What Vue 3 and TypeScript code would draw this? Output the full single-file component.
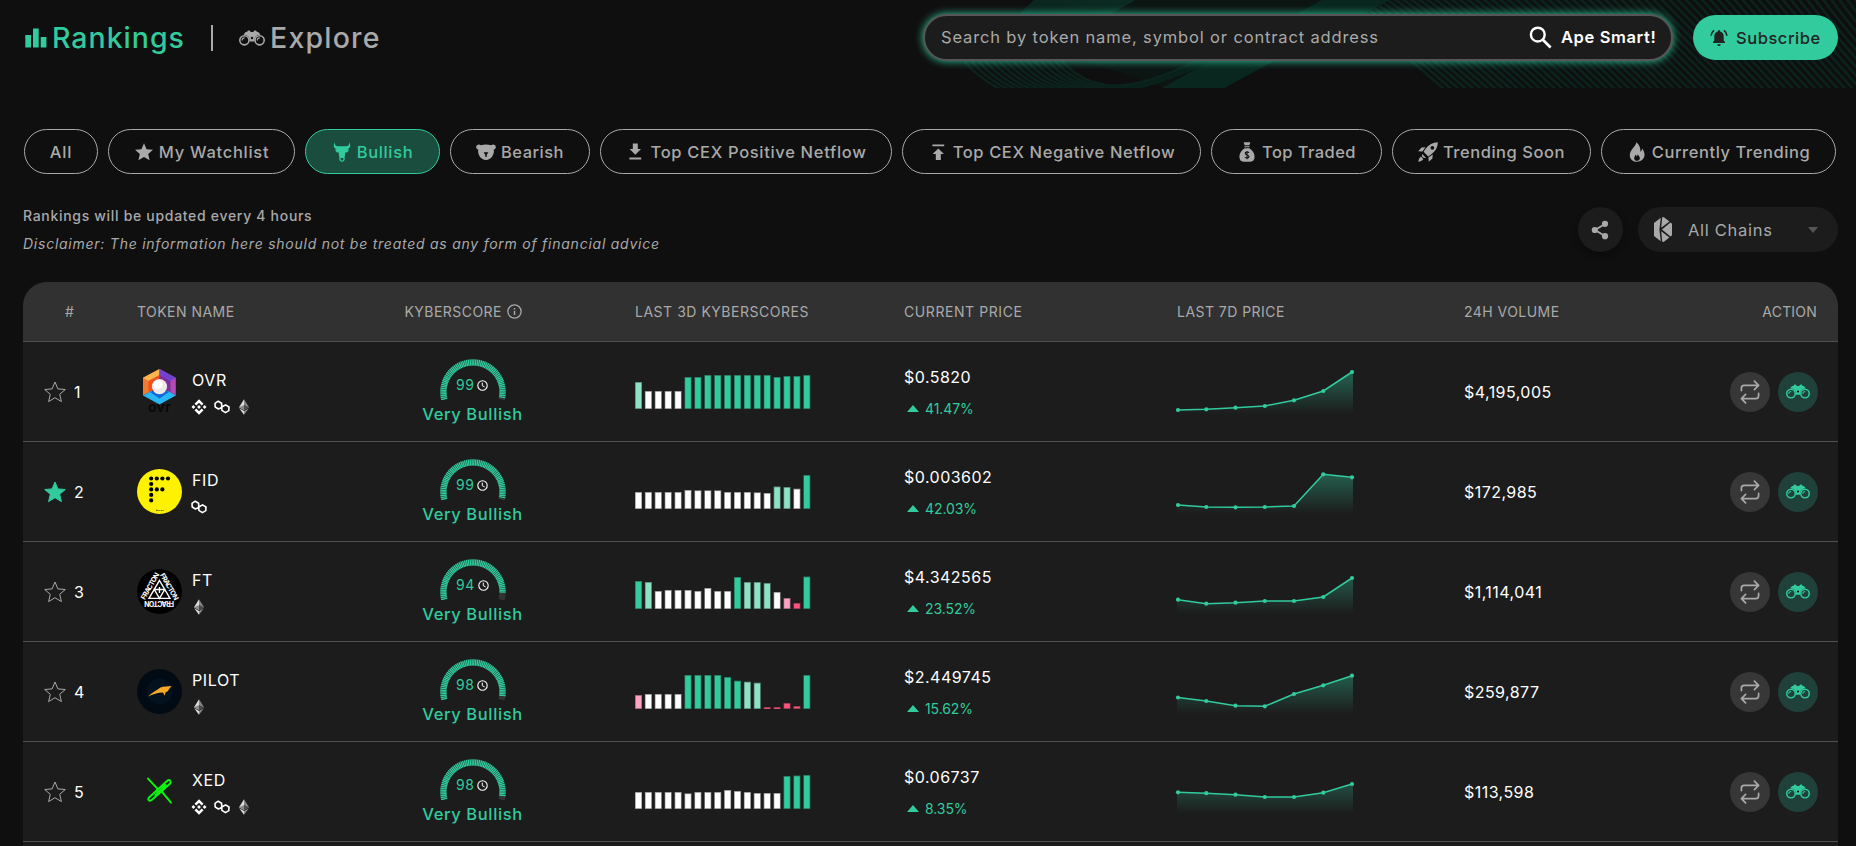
<script setup lang="ts">
type Tone = 'g' | 'l' | 'w' | 'p' | 'r'
type Chain = 'bnb' | 'matic' | 'eth'

interface Chip {
  label: string
  icon?: string
  width: number
  track: number
  active?: boolean
}

interface Token {
  rank: number
  starred: boolean
  symbol: string
  chains: Chain[]
  score: number
  bars: number[]
  tones: string
  price: string
  change: string
  trend: number[]
  volume: string
}

const chips: Chip[] = [
  { label: 'All', width: 74, track: 0.9 },
  { label: 'My Watchlist', icon: 'star', width: 187, track: 0.72 },
  { label: 'Bullish', icon: 'bull', width: 135, track: 0.66, active: true },
  { label: 'Bearish', icon: 'bear', width: 140, track: 0.46 },
  { label: 'Top CEX Positive Netflow', icon: 'down', width: 292, track: 0.68 },
  { label: 'Top CEX Negative Netflow', icon: 'up', width: 299, track: 0.61 },
  { label: 'Top Traded', icon: 'bag', width: 171, track: 0.42 },
  { label: 'Trending Soon', icon: 'rocket', width: 199, track: 0.56 },
  { label: 'Currently Trending', icon: 'flame', width: 235, track: 0.58 },
]

const tokens: Token[] = [
  {
    rank: 1, starred: false, symbol: 'OVR', chains: ['bnb', 'matic', 'eth'], score: 99,
    bars: [27, 18, 18, 18, 18, 32, 32, 34, 34, 34, 34, 34, 34, 34, 32, 33, 33, 34],
    tones: 'lwwwwggggggggggggg',
    price: '$0.5820', change: '41.47%', trend: [68, 67.3, 65.7, 64, 58.3, 49, 30], volume: '$4,195,005',
  },
  {
    rank: 2, starred: true, symbol: 'FID', chains: ['matic'], score: 99,
    bars: [17, 17, 17, 17, 17, 19, 18.7, 18.7, 18.7, 17, 17, 17, 16.7, 16, 22.5, 22, 20.3, 34],
    tones: 'wwwwwwwwwwwwwwllwg',
    price: '$0.003602', change: '42.03%', trend: [63, 65, 65.3, 65, 64, 32.3, 35.3], volume: '$172,985',
  },
  {
    rank: 3, starred: false, symbol: 'FT', chains: ['eth'], score: 94,
    bars: [28, 27, 18, 19, 19, 19, 18, 21, 18, 18, 32, 27, 27, 26, 17, 11, 6, 32.5],
    tones: 'glwwwwwwwwglllwprg',
    price: '$4.342565', change: '23.52%', trend: [57.7, 61.7, 60.7, 59, 59, 55, 36], volume: '$1,114,041',
  },
  {
    rank: 4, starred: false, symbol: 'PILOT', chains: ['eth'], score: 98,
    bars: [14, 15, 15, 15, 15, 34, 34, 34, 34, 32, 28.3, 27.3, 26.3, 2, 2, 6, 3, 34],
    tones: 'pwwwwggggggllrrrrg',
    price: '$2.449745', change: '15.62%', trend: [55.5, 59, 63.7, 64.3, 52, 43.3, 33.7], volume: '$259,877',
  },
  {
    rank: 5, starred: false, symbol: 'XED', chains: ['bnb', 'matic', 'eth'], score: 98,
    bars: [17, 17, 17, 17, 17, 15.7, 17, 17, 17, 19, 18, 17, 16, 16, 16, 33, 33.5, 34],
    tones: 'wwwwwwwwwwwwwwwggg',
    price: '$0.06737', change: '8.35%', trend: [50.3, 51.2, 52.7, 55, 55, 50.7, 42], volume: '$113,598',
  },
]

const palette: Record<Tone, string> = {
  g: '#31cb9e',
  l: '#8de2c6',
  w: '#ffffff',
  p: '#ffa3c4',
  r: '#ff537b',
}
const tone = (t: Token, i: number) => palette[t.tones[i] as Tone]

const trendX = [1, 29.3, 58.5, 87.8, 117, 146.3, 175]
const line = (t: Token) => t.trend.map((y, i) => `${trendX[i]},${y}`).join(' ')
const area = (t: Token) => `0,72 0,${t.trend[0]} ${line(t)} 176,${t.trend[6]} 176,72`

const TICKS = 62
const SWEEP = 207
const START = 166.5
const ticks = (score: number) =>
  Array.from({ length: TICKS }, (_, i) => {
    const a = ((START + (i * SWEEP) / (TICKS - 1)) * Math.PI) / 180
    return {
      x1: 33 + 26.4 * Math.cos(a),
      y1: 33 + 26.4 * Math.sin(a),
      x2: 33 + 32.8 * Math.cos(a),
      y2: 33 + 32.8 * Math.sin(a),
      on: i < Math.floor((score / 100) * TICKS),
    }
  })

const sideLines = Array.from({ length: 72 }, (_, i) => {
  const x = 1316 + i * 8.2
  return `M${x} -10C${x + 44 - i * 0.4} 18 ${x + 84 - i * 0.6} 50 ${x + 138 - i * 0.8} 98`
})
const bowlLines = Array.from({ length: 15 }, (_, i) => {
  const k = i * 7
  return `M${946 + k} 34C${985 + k} 108 ${1060 + k * 0.8} ${124 - i * 2} ${1200 + k * 0.4} ${66 - i * 2}`
})
</script>

<template>
  <svg class="sprites" width="0" height="0" aria-hidden="true">
    <linearGradient id="trendFill" x1="0" y1="30" x2="0" y2="72" gradientUnits="userSpaceOnUse">
      <stop offset="0" stop-color="#31cb9e" stop-opacity=".4" />
      <stop offset="1" stop-color="#31cb9e" stop-opacity="0" />
    </linearGradient>
    <symbol id="binoculars" viewBox="0 0 26 16">
      <path d="M4.6 4.8C5.4 2.4 7.2 1.5 8.4 1.7V1.1C8.4.2 11 .1 11.4 1.1V2H14.6V1.1C15 .1 17.6.2 17.6 1.1V1.7C18.8 1.5 20.6 2.4 21.4 4.8C18.3 4.6 15.9 6.3 15.4 9.2V11.4H10.6V9.2C10.1 6.3 7.7 4.6 4.6 4.8Z" fill="currentColor" />
      <circle cx="5.4" cy="10.3" r="4.6" fill="none" stroke="currentColor" stroke-width="1.6" />
      <circle cx="20.6" cy="10.3" r="4.6" fill="none" stroke="currentColor" stroke-width="1.6" />
      <path d="M3 10.4A2.6 2.6 0 0 1 5.6 7.9M18.2 10.4A2.6 2.6 0 0 1 20.8 7.9" fill="none" stroke="currentColor" stroke-width="1.1" />
      <circle cx="13" cy="8" r="1.2" class="hole" />
    </symbol>
    <symbol id="star" viewBox="0 0 20 20">
      <path d="M10 1.3L12.6 7.2L19 7.8L14.2 12L15.6 18.3L10 15L4.4 18.3L5.8 12L1 7.8L7.4 7.2Z" fill="currentColor" />
    </symbol>
    <symbol id="bull" viewBox="0 0 20 20">
      <path d="M2.6.2C1 3.6 1.8 6.6 4.6 7L3 8L4.6 10.2L6.6 10.4L7.5 16H12.5L13.4 10.4L15.4 10.2L17 8L15.4 7C18.2 6.6 19 3.6 17.4.2C17.3 2.8 16.4 4.2 14 4.3H6C3.6 4.2 2.7 2.8 2.6.2Z" fill="currentColor" />
      <path d="M7.9 16C7.4 20.2 12.6 20.2 12.1 16" fill="none" stroke="currentColor" stroke-width="1.3" />
    </symbol>
    <symbol id="bear" viewBox="0 0 20 20">
      <path d="M.2 5.2C0 2.6 3.2 1.6 4.8 3.2C8 2.2 12 2.2 15.2 3.2C16.8 1.6 20 2.6 19.8 5.2C19.7 6.4 19 7.2 17.8 7.6C18.6 12.8 15 18 10 18C5 18 1.4 12.8 2.2 7.6C1 7.2.3 6.4.2 5.2Z" fill="currentColor" />
      <path d="M7.6 10.2H12.4L10.7 13V15H9.3V13Z" fill="#0f0f0f" />
    </symbol>
    <symbol id="down" viewBox="0 0 20 20">
      <path d="M7.8 1.6H12.8V7H16L10.3 12.8L4.6 7H7.8ZM4.4 15.6H16.2V17.5H4.4Z" fill="currentColor" />
    </symbol>
    <symbol id="up" viewBox="0 0 20 20">
      <path d="M4.4 2.4H16.2V4.3H4.4ZM10.3 6.4L16 12.1H12.8V18H7.8V12.1H4.6Z" fill="currentColor" />
    </symbol>
    <symbol id="bag" viewBox="0 0 20 20">
      <path d="M6.6.3H13.4L12.3 3.2H7.7ZM7.4 4.2H12.6V5.3H7.4ZM7.6 6.2H12.4C15.6 8 17.6 11.6 17.6 14.6C17.6 18 16 19.8 13.4 19.8H6.6C4 19.8 2.4 18 2.4 14.6C2.4 11.6 4.4 8 7.6 6.2Z" fill="currentColor" />
      <path d="M12 10.7C11.6 9.6 8.2 9.6 8.2 11.3C8.2 13.2 12 12.6 12 14.6C12 16.4 8.3 16.4 8 15M10 9V17.2" fill="none" stroke="#0f0f0f" stroke-width="1.1" />
    </symbol>
    <symbol id="rocket" viewBox="0 0 20 20">
      <path fill-rule="evenodd" d="M19.8.2C14.8.4 10.8 2.6 7.6 6.8L5.6 9.8L10.2 14.4L13.4 12.2C17.4 9.2 19.8 5.2 19.8.2ZM14.4 3.9A1.9 1.9 0 1 1 14.4 7.7A1.9 1.9 0 0 1 14.4 3.9Z" fill="currentColor" />
      <path d="M7.4 5.2L3.6 5.6L.2 9.2L4.4 9.6ZM14.8 12.6L14.4 16.4L10.8 19.8L10.4 15.6ZM4.2 12L7.9 15.7C6.4 16.2 5.4 15.7 4.6 15.2C4 14.4 3.6 13.4 4.2 12ZM2.9 14.6L5.4 17.2C4 18.6 2.2 19.4.3 19.7C.6 17.8 1.4 16 2.9 14.6Z" fill="currentColor" />
    </symbol>
    <symbol id="flame" viewBox="0 0 20 20">
      <path fill-rule="evenodd" d="M9.2.2C9.4 3.6 4.2 6.6 3 11.4C1.8 16.2 5.4 19.8 10 19.8C14.8 19.8 18.2 16.2 17.4 11.6C17 9.2 16 7.8 15.2 6.6C15 8.2 14.4 9.2 13.4 9.8C13.8 6 12.2 2.2 9.2.2ZM10.6 12.2C12 14.2 13.2 15 12.8 16.8C12.4 18.4 11.2 18.8 10 18.8C8.4 18.8 7.2 17.8 7.2 16.2C7.2 14.8 8.2 14.2 8.4 12.8C9.2 13.2 9.6 13.8 9.8 14.4C10.4 13.8 10.6 13 10.6 12.2Z" fill="currentColor" />
    </symbol>
    <symbol id="bnb" viewBox="0 0 16 16">
      <path d="M8 .2L12.5 4.7L10.7 6.5L8 3.8L5.3 6.5L3.5 4.7ZM2.4 6.1L4.3 8L2.4 9.9L.5 8ZM13.6 6.1L15.5 8L13.6 9.9L11.7 8ZM8 6.1L9.9 8L8 9.9L6.1 8ZM5.3 9.5L8 12.2L10.7 9.5L12.5 11.3L8 15.8L3.5 11.3Z" fill="#fff" />
    </symbol>
    <symbol id="matic" viewBox="0 0 16 16">
      <path d="M7.6 8.6L4.4 10L1.2 8L1 4.4L4.2 2.2L7.6 4.2L7.9 11.4L11.4 13.6L14.8 11.6L15 8L11.6 5.9L8.2 7.8" fill="none" stroke="#fff" stroke-width="1.6" stroke-linejoin="round" />
    </symbol>
    <symbol id="eth" viewBox="0 0 16 16">
      <path d="M8 .2V10.9L3 8.2Z" fill="#dcdcdc" />
      <path d="M8 .2V10.9L13 8.2Z" fill="#858585" />
      <path d="M3 8.2L8 6V10.9Z" fill="#8c8c8c" />
      <path d="M13 8.2L8 6V10.9Z" fill="#4a4a4a" />
      <path d="M3.2 9.3L8 12V15.8Z" fill="#e0e0e0" />
      <path d="M12.8 9.3L8 12V15.8Z" fill="#909090" />
    </symbol>
  </svg>

  <main class="page">
    <svg class="waves" viewBox="0 0 1856 88" width="1856" height="88" aria-hidden="true">
      <defs>
        <linearGradient id="leftBand" x1="1" y1="0" x2="0" y2="1">
          <stop offset="0" stop-color="#0b2c23" />
          <stop offset="1" stop-color="#0c1d18" />
        </linearGradient>
      </defs>
      <path d="M1034 0H1390L1225 88H1165L1020 40Z" fill="#0d1513" />
      <g fill="none" stroke="#0b231c" stroke-width="2.6">
        <path v-for="d in bowlLines" :key="d" :d="d" />
        <path v-for="d in sideLines" :key="d" :d="d" />
      </g>
      <path d="M1034 0H1135L1080 32H1000Z" fill="url(#leftBand)" />
      <path d="M1322 0H1390L1322 36C1285 56 1255 70 1225 88H1162C1200 66 1235 48 1270 28Z" fill="#09271e" />
    </svg>

    <header class="topbar">
      <nav class="tabs">
        <a class="tab on">
          <svg width="22" height="20" viewBox="0 0 22 20"><path d="M.3 7H6V19.5H.3ZM8 .5H13.7V19.5H8ZM15.7 9H21.4V19.5H15.7Z" fill="currentColor" /></svg>
          <span class="rank-label">Rankings</span>
        </a>
        <i class="divider"></i>
        <a class="tab">
          <svg width="26" height="16"><use href="#binoculars" /></svg>
          <span class="explore-label">Explore</span>
        </a>
      </nav>
      <div class="search">
        <span class="placeholder">Search by token name, symbol or contract address</span>
        <svg width="23" height="23" viewBox="0 0 23 23"><circle cx="8.8" cy="8.6" r="6.9" fill="none" stroke="#fff" stroke-width="2.4" /><path d="M13.6 13.6L21.6 21.6" stroke="#fff" stroke-width="2.8" /></svg>
        <span class="ape">Ape Smart!</span>
      </div>
      <button class="subscribe">
        <svg width="18" height="18" viewBox="0 0 18 18"><path d="M9 1.2C9.8 1.2 10.2 1.7 10.2 2.4C12.6 3 13.7 4.9 13.7 7.2V11.6L15 13V14H3V13L4.3 11.6V7.2C4.3 4.9 5.4 3 7.8 2.4C7.8 1.7 8.2 1.2 9 1.2ZM7.2 15.2H10.8C10.6 17.6 7.4 17.6 7.2 15.2Z" fill="currentColor" /><path d="M4 1.4C2.2 2.8 1.2 4.6 1 6.8M14 1.4C15.8 2.8 16.8 4.6 17 6.8" fill="none" stroke="currentColor" stroke-width="1.6" /></svg>
        <span>Subscribe</span>
      </button>
    </header>

    <div class="chips">
      <button v-for="c in chips" :key="c.label" class="chip" :class="{ active: c.active }" :style="{ width: c.width + 'px', letterSpacing: c.track + 'px' }">
        <svg v-if="c.icon" width="20" height="20"><use :href="'#' + c.icon" /></svg>
        <span>{{ c.label }}</span>
      </button>
    </div>

    <section class="meta">
      <div class="notes">
        <p class="update">Rankings will be updated every 4 hours</p>
        <p class="disclaimer">Disclaimer: The information here should not be treated as any form of financial advice</p>
      </div>
      <button class="share">
        <svg width="18" height="20" viewBox="0 0 18 20"><path d="M14 4L4 10L14 16" fill="none" stroke="#a9a9a9" stroke-width="1.9" /><circle cx="14" cy="3.8" r="3.1" fill="#a9a9a9" /><circle cx="3.8" cy="10" r="3.1" fill="#a9a9a9" /><circle cx="14" cy="16.2" r="3.1" fill="#a9a9a9" /></svg>
      </button>
      <div class="chains-select">
        <svg width="18" height="25" viewBox="0 0 18 25"><path d="M0 6L6.8.8L5.4 12.5L6.8 24.2L0 19Z" fill="#a9a9a9" /><path d="M8.2.4L9.6 0L15.4 4.4L7.2 10.8ZM16.4 5.6L18 6.8V18.2L16.4 19.4L8 12.5ZM7.2 14.2L15.4 20.6L9.6 25L8.2 24.6Z" fill="#a9a9a9" /></svg>
        <span>All Chains</span>
        <i class="caret"></i>
      </div>
    </section>

    <section class="table">
      <div class="row head">
        <span class="c-num">#</span>
        <span>TOKEN NAME</span>
        <span class="h-score">KYBERSCORE
          <svg width="15" height="15" viewBox="0 0 15 15"><circle cx="7.5" cy="7.5" r="6.6" fill="none" stroke="currentColor" stroke-width="1.3" /><path d="M7.5 6.7V11M7.5 4V5.4" stroke="currentColor" stroke-width="1.4" /></svg>
        </span>
        <span class="h-bars">LAST 3D KYBERSCORES</span>
        <span class="h-price">CURRENT PRICE</span>
        <span>LAST 7D PRICE</span>
        <span>24H VOLUME</span>
        <span class="h-action">ACTION</span>
      </div>

      <div v-for="t in tokens" :key="t.rank" class="row body">
        <div class="rank">
          <svg width="22" height="22" viewBox="0 0 22 22" :class="{ starred: t.starred }"><path d="M11 1L13.9 7.9L21.3 8.5L15.7 13.3L17.4 20.6L11 16.7L4.6 20.6L6.3 13.3L.7 8.5L8.1 7.9Z" /></svg>
          <span>{{ t.rank }}</span>
        </div>

        <div class="token">
          <svg class="logo" width="45" height="45" viewBox="0 0 45 45">
            <g v-if="t.symbol === 'OVR'">
              <path d="M22.5 0L6 8.8V26.4L22.5 17.5Z" fill="#f47a2c" />
              <path d="M22.5 0L6 8.8L11.5 12L22.5 6Z" fill="#fbb44c" />
              <path d="M11.5 12L22.5 6V17.5L11.5 23.5Z" fill="#f0501f" />
              <path d="M22.5 0L38.8 8.8V26.4L22.5 17.5Z" fill="#b44ab4" />
              <path d="M22.5 0L38.8 8.8L33.5 12L22.5 6Z" fill="#7142cf" />
              <path d="M22.5 6L33.5 12V23.5L22.5 17.5Z" fill="#7b2f9a" />
              <path d="M6 26.4L14 22H31L38.8 26.4L22.5 35.4Z" fill="#28b6f4" />
              <path d="M13 23L22.5 19L32 23L22.5 29.4Z" fill="#1268d8" />
              <circle cx="22.5" cy="17.6" r="7.6" fill="#efe6ea" />
              <circle cx="21" cy="15.6" r="4.6" fill="#fff" />
              <text x="22.5" y="43.4" text-anchor="middle" class="ovr-word">ovr</text>
            </g>
            <g v-else-if="t.symbol === 'FID'">
              <circle cx="22.5" cy="22.5" r="22.5" fill="#fff200" />
              <g fill="#000">
                <circle cx="14.2" cy="9.5" r="2.1" /><circle cx="19.8" cy="9.5" r="2.1" /><circle cx="25.4" cy="9.5" r="2.1" /><circle cx="31" cy="9.5" r="2.1" />
                <circle cx="14.2" cy="15" r="2.1" />
                <circle cx="14.2" cy="20.4" r="2.1" /><circle cx="19.8" cy="20.4" r="2.1" /><circle cx="25.4" cy="20.4" r="2.1" />
                <circle cx="14.2" cy="25.9" r="2.1" /><circle cx="14.2" cy="31.4" r="2.1" />
                <path d="M19.4 40.8H20.4V42H19.4ZM21.6 41.2H22.6V42H21.6ZM23.8 41H24.6V42H23.8ZM25.6 41.2H26.4V42H25.6Z" />
              </g>
            </g>
            <g v-else-if="t.symbol === 'FT'">
              <circle cx="22.5" cy="22.5" r="22.5" fill="#000" />
              <path d="M22.5 11.5L33 29.4H12ZM22.5 29.4L17.3 20.5H27.7ZM22.5 18V24" fill="none" stroke="#fff" stroke-width="1.4" />
              <text class="ft-word" transform="translate(22.5 31.6) rotate(180)" text-anchor="middle">FRACTON</text>
              <text class="ft-word" transform="translate(15 18.6) rotate(-60)" text-anchor="middle">FRACTON</text>
              <text class="ft-word" transform="translate(30 18.6) rotate(60)" text-anchor="middle">FRACTON</text>
            </g>
            <g v-else-if="t.symbol === 'PILOT'">
              <circle cx="22.5" cy="22.5" r="22.5" fill="#020b14" />
              <circle cx="22.5" cy="22.5" r="13" fill="#04111e" />
              <path d="M11 27.4C15 23.4 20 21.4 23.4 18.6C26.4 17.2 31 17.6 34.8 17.1C33 18.8 32 20.6 30.8 22.2L28.6 23.2L27.6 26.8L26 23.4C21 23.4 15.4 25.4 11 27.4Z" fill="#f9a825" />
            </g>
            <g v-else fill="none" stroke="#0cf510" stroke-width="2" stroke-linecap="round" stroke-linejoin="round">
              <path d="M11 9.6L20.4 19.6V22M24.6 22.4L34 33.6" />
              <path d="M11.8 28.8L30.6 11.4C32.8 10.2 34.6 12.8 33.2 14.6L14.4 31.2C12.2 32.6 10.4 30.6 11.8 28.8ZM18.4 26L28.6 16" />
            </g>
          </svg>
          <div class="ident">
            <span class="symbol">{{ t.symbol }}</span>
            <span class="chain-list">
              <svg v-for="c in t.chains" :key="c" width="16" height="16"><use :href="'#' + c" /></svg>
            </span>
          </div>
        </div>

        <div class="score">
          <div class="gauge">
            <svg width="66" height="41" viewBox="0 0 66 41">
              <line v-for="(k, i) in ticks(t.score)" :key="i" :x1="k.x1" :y1="k.y1" :x2="k.x2" :y2="k.y2" :stroke="k.on ? '#31cb9e' : '#3a3a3a'" stroke-width="1.45" />
            </svg>
            <div class="value">
              <span>{{ t.score }}</span>
              <svg width="11" height="11" viewBox="0 0 11 11"><circle cx="5.5" cy="5.5" r="4.7" fill="none" stroke="#fff" stroke-width="1.1" /><path d="M5.3 2.6V5.7L7.6 6.9" fill="none" stroke="#fff" stroke-width="1" /></svg>
            </div>
          </div>
          <span class="verdict">Very Bullish</span>
        </div>

        <svg class="bars" width="176" height="34" viewBox="0 0 176 34">
          <g v-for="(h, i) in t.bars" :key="i">
            <rect :x="i * 9.9" :y="34 - h" width="7" :height="h" :fill="tone(t, i)" opacity=".5" />
            <rect :x="i * 9.9 + 0.7" :y="34.8 - h" width="5.6" :height="Math.max(h - 1.6, 1)" :fill="tone(t, i)" />
          </g>
        </svg>

        <div class="price">
          <span class="amount">{{ t.price }}</span>
          <span class="change"><i></i>{{ t.change }}</span>
        </div>

        <svg class="trend" width="180" height="99" viewBox="0 0 180 99">
          <polygon :points="area(t)" fill="url(#trendFill)" />
          <polyline :points="line(t)" fill="none" stroke="#31cb9e" stroke-width="1.5" />
          <circle v-for="(y, i) in t.trend" :key="i" :cx="trendX[i]" :cy="y" r="2.1" fill="#31cb9e" />
        </svg>

        <span class="volume">{{ t.volume }}</span>

        <div class="actions">
          <button class="round swap">
            <svg width="20" height="24" viewBox="0 0 20 24" fill="none" stroke="#a9a9a9" stroke-width="1.7" stroke-linecap="round" stroke-linejoin="round"><path d="M1.4 10.6V8.2C1.4 6.4 2.4 5.4 4.2 5.4H18.4M14.4 1.2L18.6 5.4L14.4 9.6M18.6 13.4V15.8C18.6 17.6 17.6 18.6 15.8 18.6H1.6M5.6 14.4L1.4 18.6L5.6 22.8" /></svg>
          </button>
          <button class="round view"><svg width="24" height="15"><use href="#binoculars" /></svg></button>
        </div>
      </div>
    </section>
  </main>
</template>

<style>
html,
body {
  background: #0f0f0f;
  overflow: hidden;
}
</style>

<style scoped>
.sprites {
  position: absolute;
}
.hole {
  fill: #0f0f0f;
}
.page {
  position: relative;
  box-sizing: border-box;
  display: flex;
  flex-direction: column;
  width: 1856px;
  height: 846px;
  padding: 0 18px 0 23px;
  overflow: hidden;
  background: #0f0f0f;
  color: #a9a9a9;
  font-family: Inter, 'Liberation Sans', sans-serif;
  font-size: 16px;
}
svg {
  display: block;
  flex: none;
}
button {
  margin: 0;
  padding: 0;
  border: 0;
  background: none;
  color: inherit;
  font: inherit;
}
p {
  margin: 0;
}
span {
  white-space: nowrap;
}
.waves {
  position: absolute;
  top: 0;
  left: 0;
}
.topbar {
  position: relative;
  display: flex;
  align-items: center;
  height: 47px;
  margin-top: 14px;
}
.tabs {
  display: flex;
  align-items: center;
  flex: 1;
  padding-left: 2px;
}
.tab {
  display: flex;
  align-items: center;
  gap: 5px;
  font-size: 28.5px;
  font-weight: 500;
  line-height: 40px;
}
.tab.on {
  color: #31cb9e;
}
.rank-label {
  width: 131px;
  letter-spacing: 1px;
}
.explore-label {
  letter-spacing: 1.2px;
}
.divider {
  width: 2px;
  height: 26px;
  margin: 0 26px 0 28px;
  background: #a9a9a9;
}
.search {
  box-sizing: border-box;
  display: flex;
  align-items: center;
  width: 750px;
  height: 47px;
  padding: 0 14px 1px 16px;
  border: 2px solid #565656;
  border-radius: 24px;
  background: #1c1c1c;
  box-shadow: 0 0 9px 0 #31cb9e;
}
.placeholder {
  flex: 1;
  font-size: 16.5px;
  letter-spacing: 0.85px;
}
.ape {
  width: 96px;
  margin-left: 9px;
  color: #fff;
  font-size: 16.5px;
  font-weight: 600;
  letter-spacing: 0.62px;
}
.subscribe {
  display: flex;
  align-items: center;
  gap: 8px;
  width: 145px;
  height: 45px;
  margin-left: 20px;
  padding-left: 17px;
  border-radius: 23px;
  background: #31cb9e;
  color: #222;
  font-size: 16.5px;
  font-weight: 500;
  letter-spacing: 0.55px;
}
.chips {
  display: flex;
  gap: 10px;
  margin: 68px 0 0 1px;
}
.chip {
  box-sizing: border-box;
  display: flex;
  flex: none;
  align-items: center;
  justify-content: center;
  gap: 5px;
  height: 45px;
  border: 1px solid #a9a9a9;
  border-radius: 23px;
  font-size: 16.5px;
  font-weight: 500;
}
.chip.active {
  border-color: #31cb9e;
  background: #1b4d3f;
  color: #31cb9e;
}
.meta {
  display: flex;
  align-items: center;
  height: 45px;
  margin-top: 33px;
}
.notes {
  flex: 1;
  font-size: 14px;
  line-height: 28px;
}
.update {
  font-weight: 500;
  letter-spacing: 0.69px;
}
.disclaimer {
  font-style: italic;
  letter-spacing: 0.75px;
}
.share {
  display: flex;
  align-items: center;
  justify-content: center;
  width: 45px;
  height: 45px;
  border-radius: 50%;
  background: #1c1c1c;
  box-shadow: 0 4px 6px rgba(0, 0, 0, 0.3);
}
.share svg {
  margin-right: 1px;
}
.chains-select {
  box-sizing: border-box;
  display: flex;
  align-items: center;
  gap: 16px;
  width: 200px;
  height: 45px;
  margin-left: 15px;
  padding: 0 20px 0 16px;
  border-radius: 23px;
  background: #1c1c1c;
  font-size: 16.5px;
  letter-spacing: 0.7px;
}
.chains-select span {
  flex: 1;
}
.caret {
  border: 5px solid transparent;
  border-top: 6px solid #565656;
  border-bottom: 0;
}
.table {
  flex: none;
  height: 600px;
  margin-top: 30px;
  border-radius: 24px 24px 0 0;
  overflow: hidden;
  background: #1c1c1c;
}
.row {
  box-sizing: border-box;
  display: grid;
  grid-template-columns: 114px 267.5px 230px 269.5px 273px 287px 1fr 120px;
  align-items: center;
  border-bottom: 1px solid #505050;
}
.head {
  height: 60px;
  background: #313131;
  font-size: 14px;
  letter-spacing: 0.46px;
}
.body {
  height: 100px;
}
.c-num {
  padding-left: 42px;
}
.h-score {
  display: flex;
  align-items: center;
  gap: 5px;
}
.h-bars {
  padding-left: 0.5px;
  letter-spacing: 0.52px;
}
.h-price {
  letter-spacing: 0.58px;
}
.h-action {
  padding-right: 21px;
  text-align: right;
  letter-spacing: 0.2px;
}
.rank {
  display: flex;
  align-items: center;
  gap: 8px;
  padding-left: 21px;
  color: #fff;
}
.rank path {
  fill: none;
  stroke: #a9a9a9;
  stroke-width: 1;
}
.rank .starred path {
  fill: #31cb9e;
  stroke: #31cb9e;
}
.token {
  display: flex;
  align-items: center;
  gap: 10px;
}
.logo {
  overflow: visible;
}
.ovr-word {
  fill: #080808;
  font-size: 14px;
  font-weight: 600;
  letter-spacing: 0.4px;
}
.ft-word {
  fill: #fff;
  font-size: 7px;
  font-weight: 700;
  letter-spacing: -0.7px;
}
.ident {
  display: flex;
  flex-direction: column;
  gap: 9px;
  padding-top: 1px;
}
.symbol {
  color: #fff;
  line-height: 20px;
  letter-spacing: 0.6px;
}
.chain-list {
  display: flex;
  gap: 6.3px;
  margin-left: -0.7px;
}
.score {
  display: flex;
  flex-direction: column;
  align-items: center;
  width: 136px;
  color: #31cb9e;
}
.gauge {
  position: relative;
}
.value {
  position: absolute;
  top: 17px;
  left: 16.5px;
  display: flex;
  align-items: center;
  gap: 3px;
  font-size: 14px;
  line-height: 18px;
  letter-spacing: 0.5px;
}
.verdict {
  margin-top: 4px;
  font-size: 16.5px;
  font-weight: 500;
  line-height: 20px;
  letter-spacing: 0.62px;
}
.price {
  display: flex;
  flex-direction: column;
  gap: 12px;
  padding-top: 2px;
}
.amount {
  color: #fff;
  line-height: 20px;
  letter-spacing: 0.48px;
}
.change {
  display: flex;
  align-items: center;
  color: #31cb9e;
  font-size: 14px;
  line-height: 20px;
  letter-spacing: -0.08px;
}
.change i {
  margin: 0 6px 1px 3px;
  border: 6px solid transparent;
  border-top: 0;
  border-bottom: 7px solid #31cb9e;
}
.trend {
  overflow: visible;
}
.volume {
  padding-top: 1px;
  color: #fff;
  letter-spacing: 0.45px;
}
.actions {
  display: flex;
  justify-content: flex-end;
  gap: 8px;
  padding-right: 20px;
}
.round {
  display: flex;
  flex: none;
  align-items: center;
  justify-content: center;
  width: 40px;
  height: 40px;
  border-radius: 50%;
}
.swap {
  background: #373737;
}
.view {
  background: #20403a;
  color: #31cb9e;
}
.view .hole {
  fill: #20403a;
}
</style>
